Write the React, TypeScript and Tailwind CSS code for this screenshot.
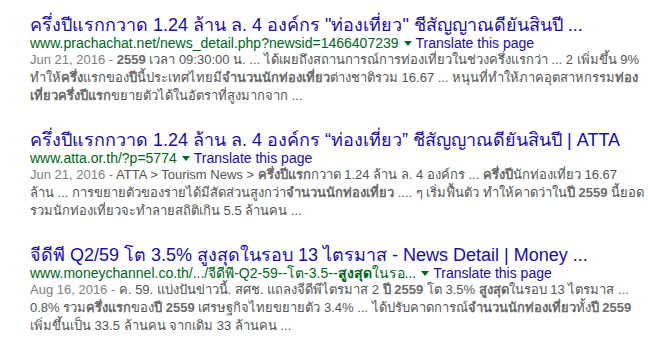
import React from 'react'

type Part = string | { b: string }

type Result = {
  title: string
  url: Part[]
  date: string
  lines: Part[][]
}

const results: Result[] = [
  {
    title: 'ครึ่งปีแรกกวาด 1.24 ล้าน ล. 4 องค์กร "ท่องเที่ยว" ชีสัญญาณดียันสินปี ...',
    url: ['www.prachachat.net/news_detail.php?newsid=1466407239'],
    date: 'Jun 21, 2016 - ',
    lines: [
      [{ b: '2559' }, ' เวลา 09:30:00 น. ... ได้เผยถึงสถานการณ์การท่องเที่ยวในช่วงครึ่งแรกว่า ... 2 เพิ่มขึ้น 9%'],
      ['ทำให้', { b: 'ครึ่ง' }, 'แรกของ', { b: 'ปี' }, 'นี้ประเทศไทยมี', { b: 'จำนวนนักท่องเที่ยว' }, 'ต่างชาติรวม 16.67 ... หนุนที่ทำให้ภาคอุตสาหกรรม', { b: 'ท่อง' }],
      [{ b: 'เที่ยวครึ่งปีแรก' }, 'ขยายตัวได้ในอัตราที่สูงมากจาก ...'],
    ],
  },
  {
    title: 'ครึ่งปีแรกกวาด 1.24 ล้าน ล. 4 องค์กร “ท่องเที่ยว” ชีสัญญาณดียันสินปี | ATTA',
    url: ['www.atta.or.th/?p=5774'],
    date: 'Jun 21, 2016 - ',
    lines: [
      ['ATTA > Tourism News > ', { b: 'ครึ่งปีแรก' }, 'กวาด 1.24 ล้าน ล. 4 องค์กร ... ', { b: 'ครึ่งปี' }, 'นักท่องเที่ยว 16.67'],
      ['ล้าน ... การขยายตัวของรายได้มีสัดส่วนสูงกว่า', { b: 'จำนวนนักท่องเที่ยว' }, ' .... ๆ เริ่มฟื้นตัว ทำให้คาดว่าใน', { b: 'ปี 2559' }, ' นี้ยอด'],
      ['รวมนักท่องเที่ยวจะทำลายสถิติเกิน 5.5 ล้านคน ...'],
    ],
  },
  {
    title: 'จีดีพี Q2/59 โต 3.5% สูงสุดในรอบ 13 ไตรมาส - News Detail | Money ...',
    url: ['www.moneychannel.co.th/.../จีดีพี-Q2-59--โต-3.5--', { b: 'สูงสุด' }, 'ในรอ...'],
    date: 'Aug 16, 2016 - ',
    lines: [
      ['ค. 59. แบ่งปันข่าวนี้. สศช. แถลงจีดีพีไตรมาส 2 ', { b: 'ปี 2559' }, ' โต 3.5% ', { b: 'สูงสุด' }, 'ในรอบ 13 ไตรมาส ...'],
      ['0.8% รวม', { b: 'ครึ่งแรก' }, 'ของ', { b: 'ปี 2559' }, ' เศรษฐกิจไทยขยายตัว 3.4% ... ได้ปรับคาดการณ์', { b: 'จำนวนนักท่องเที่ยว' }, 'ทั้ง', { b: 'ปี 2559' }],
      ['เพิ่มขึ้นเป็น 33.5 ล้านคน จากเดิม 33 ล้านคน ...'],
    ],
  },
]

const renderParts = (parts: Part[], boldClass: string) =>
  parts.map((p, i) =>
    typeof p === 'string' ? (
      <span key={i}>{p}</span>
    ) : (
      <b key={i} className={boldClass}>
        {p.b}
      </b>
    )
  )

const App = () => {
  return (
    <div className="min-h-[349px] bg-white pl-[30px] pt-[16px] font-['Liberation_Sans',Arial,sans-serif]">
      {results.map((r, i) => (
        <div key={i} className="mb-[26px]">
          <div className="whitespace-nowrap text-[18px] leading-[18px] text-[#1a0dab]">{r.title}</div>
          <div className="mt-[1px] flex items-center whitespace-nowrap text-[14px] leading-[16px]">
            <span className="text-[#006621]">{renderParts(r.url, 'font-bold')}</span>
            <span className="ml-[5px] mr-[4px] inline-block h-0 w-0 border-x-[4px] border-t-[5px] border-x-transparent border-t-[#006621]"></span>
            <span className="text-[#1a0dab]">Translate this page</span>
          </div>
          <div className="text-[13px] leading-[18px] text-[#545454]">
            {r.lines.map((line, j) => (
              <div key={j} className="whitespace-nowrap">
                {j === 0 && <span className="text-[#808080]">{r.date}</span>}
                {renderParts(line, 'font-bold text-[#6a6a6a]')}
              </div>
            ))}
          </div>
        </div>
      ))}
    </div>
  )
}

export default App
